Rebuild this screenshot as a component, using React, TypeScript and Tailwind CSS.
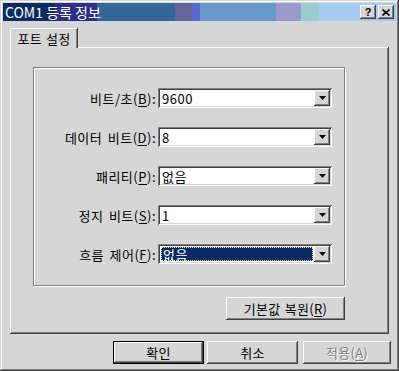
import React from "react";

const raised =
  "shadow-[inset_-1px_-1px_#404040,inset_1px_1px_#ffffff,inset_-2px_-2px_#808080,inset_2px_2px_#d6d6d6]";

function Arrow() {
  return (
    <svg width="7" height="4" viewBox="0 0 7 4" className="block">
      <polygon points="0,0 7,0 3.5,4" fill="#000" />
    </svg>
  );
}

function Combo({ value, selected }: { value: string; selected?: boolean }) {
  return (
    <div className="w-[174px] h-[20px] bg-white flex p-[2px] shadow-[inset_1px_1px_#808080,inset_-1px_-1px_#ffffff,inset_2px_2px_#404040,inset_-2px_-2px_#d6d6d6]">
      <div className="flex-1 flex items-center min-w-0">
        {selected ? (
          <div className="mx-[1px] h-[14px] flex-1 bg-[#0a2a64] border border-dotted border-[#e8e8c0] flex items-center pl-[1px] text-white text-[13px] leading-none tracking-[0.5px]">
            {value}
          </div>
        ) : (
          <div className="pl-[2px] text-[13px] leading-none text-black tracking-[0.5px]">{value}</div>
        )}
      </div>
      <div className={`w-[16px] h-[16px] bg-[#d6d6d6] flex items-center justify-center ${raised}`}>
        <Arrow />
      </div>
    </div>
  );
}

function Label({ text, mn }: { text: string; mn: string }) {
  return (
    <div className="w-[122px] text-right text-[13px] leading-none text-black whitespace-nowrap tracking-[0.5px] [word-spacing:2px]">
      {text}(<span className="underline underline-offset-2">{mn}</span>):
    </div>
  );
}

function Row({ label, mn, value, selected }: { label: string; mn: string; value: string; selected?: boolean }) {
  return (
    <div className="flex items-center h-[20px]">
      <Label text={label} mn={mn} />
      <div className="ml-[2px]">
        <Combo value={value} selected={selected} />
      </div>
    </div>
  );
}

function Button({
  children,
  w,
  def,
  disabled,
}: {
  children: React.ReactNode;
  w: string;
  def?: boolean;
  disabled?: boolean;
}) {
  return (
    <div
      className={`${w} h-[23px] bg-[#d6d6d6] flex items-center justify-center text-[13px] leading-none tracking-[0.3px] [word-spacing:1px] ${
        def ? "border border-black" : ""
      } ${disabled ? "text-[#808080] [text-shadow:1px_1px_#ffffff]" : "text-black"}`}
    >
      <div className={`w-full h-full flex items-center justify-center ${raised}`}>{children}</div>
    </div>
  );
}

export default function App() {
  return (
    <div className="w-[399px] h-[371px] bg-[#d6d6d6] p-[3px] flex flex-col font-['Noto_Sans_CJK_KR','Noto_Sans',sans-serif] shadow-[inset_-1px_-1px_#404040,inset_1px_1px_#d6d6d6,inset_-2px_-2px_#808080,inset_2px_2px_#ffffff]">
      {/* Title bar */}
      <div className="h-[18px] flex items-center justify-between bg-[linear-gradient(to_right,#0c2a64_0px,#0c2a64_52px,#2c2e8c_52px,#2c2e8c_94px,#336699_94px,#336699_172px,#666699_172px,#666699_189px,#5a6acc_189px,#5a6acc_197px,#6699cc_197px,#6699cc_273px,#9999cc_273px,#9999cc_298px,#99cccc_298px,#99cccc_316px,#a6caf0_316px,#a6caf0_100%)]">
        <div className="pl-[2px] text-white text-[14px] leading-none">COM1 등록 정보</div>
        <div className="flex items-center pr-[2px] gap-[2px]">
          <div className={`w-[16px] h-[14px] bg-[#d6d6d6] flex items-center justify-center ${raised}`}>
            <span className="font-['Liberation_Sans',sans-serif] font-bold text-[11px] leading-none text-black">?</span>
          </div>
          <div className={`w-[16px] h-[14px] bg-[#d6d6d6] flex items-center justify-center ${raised}`}>
            <svg width="8" height="7" viewBox="0 0 8 7" className="block">
              <path d="M0.5 0.5 L7.5 6.5 M7.5 0.5 L0.5 6.5" stroke="#000" strokeWidth="1.6" />
            </svg>
          </div>
        </div>
      </div>

      {/* Tab strip */}
      <div className="mt-[7px] ml-[7px] flex">
        <div className="relative z-10 w-[67px] h-[20px] bg-[#d6d6d6] rounded-tl-[2px] border-l border-t border-white flex items-start justify-center pt-[3px] text-[13px] leading-none text-black tracking-[0.2px] [word-spacing:1px] shadow-[inset_-1px_0_#808080,1px_0_#404040]">
          포트 설정
        </div>
      </div>

      {/* Panel */}
      <div className="-mt-[1px] ml-[7px] w-[379px] h-[287px] pt-[20px] pl-[23px] flex flex-col shadow-[inset_-1px_-1px_#404040,inset_1px_1px_#ffffff,inset_-2px_-2px_#808080]">
        <div className="w-[312px] h-[219px] border border-[#808080] shadow-[inset_1px_1px_#ffffff,1px_1px_#ffffff] pt-[20px] flex flex-col gap-[19px]">
          <Row label="비트/초" mn="B" value="9600" />
          <Row label="데이터 비트" mn="D" value="8" />
          <Row label="패리티" mn="P" value="없음" />
          <Row label="정지 비트" mn="S" value="1" />
          <Row label="흐름 제어" mn="F" value="없음" selected />
        </div>
        <div className="w-[312px] flex justify-end mt-[11px]">
          <Button w="w-[119px]">
            기본값 복원(<span className="underline underline-offset-2">R</span>)
          </Button>
        </div>
      </div>

      {/* Bottom buttons */}
      <div className="mt-[7px] flex justify-end pr-[5px]">
        <Button w="w-[91px]" def>
          확인
        </Button>
        <div className="w-[3px]" />
        <Button w="w-[91px]">취소</Button>
        <div className="w-[5px]" />
        <Button w="w-[88px]" disabled>
          적용(<span className="underline underline-offset-2">A</span>)
        </Button>
      </div>
    </div>
  );
}
